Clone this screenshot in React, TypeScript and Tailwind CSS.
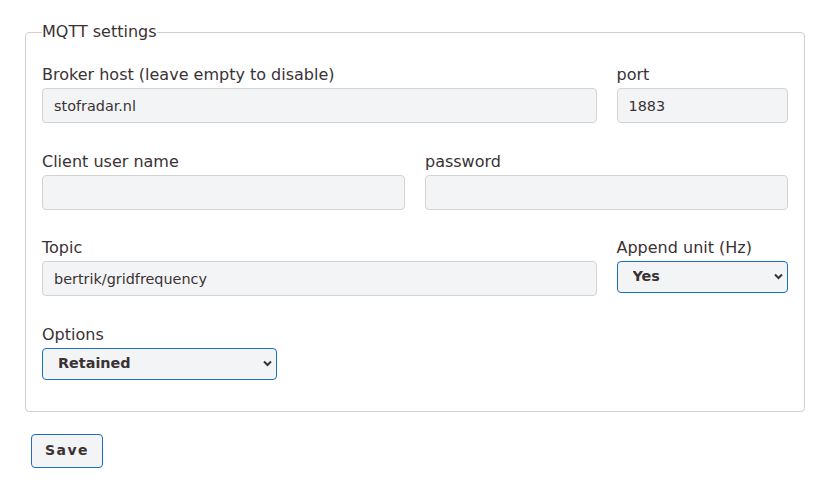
import React from "react";

const font = { fontFamily: '"DejaVu Sans", "Noto Sans", sans-serif' };

function Input({ value }: { value: string }) {
  return (
    <input
      readOnly
      value={value}
      className="block h-[35px] w-full rounded-[4px] border border-[#d3d3d3] bg-[#f3f4f6] px-[11px] text-[14.4px] text-[#3a3234] outline-none"
      style={font}
    />
  );
}

function Select({ value }: { value: string }) {
  return (
    <div className="relative h-[32px] w-full">
      <select
        defaultValue={value}
        className="block h-[32px] w-full appearance-none rounded-[4px] border border-[#1a6fc4] bg-[#f3f4f6] pl-[15px] text-[14.4px] font-bold text-[#3a3234] outline-none"
        style={font}
      >
        <option>{value}</option>
      </select>
      <svg
        className="pointer-events-none absolute right-[5px] top-[12px]"
        width="9"
        height="7"
        viewBox="0 0 9 7"
      >
        <path d="M1 1.5 L4.5 5 L8 1.5" fill="none" stroke="#3a3234" strokeWidth="2" />
      </svg>
    </div>
  );
}

function Field({
  label,
  span,
  children,
}: {
  label: string;
  span: string;
  children: React.ReactNode;
}) {
  return (
    <div className={span}>
      <div className="mb-[2px] h-[22px] text-[16px] leading-[22px] text-[#3a3234]">{label}</div>
      {children}
    </div>
  );
}

export default function App() {
  return (
    <div className="min-h-[493px] bg-white pl-[25px] pr-[27px] pt-[22px]" style={font}>
      <fieldset className="m-0 rounded-[4px] border border-[#cfcfcf] px-[16px] pb-[31px] pt-[22px]">
        <legend className="px-0 text-[16px] leading-[20px] text-[#3a3234]">MQTT settings</legend>
        <div className="grid grid-cols-12 gap-x-[20px] gap-y-[27.5px] items-start">
          <Field label="Broker host (leave empty to disable)" span="col-span-9">
            <Input value="stofradar.nl" />
          </Field>
          <Field label="port" span="col-span-3">
            <Input value="1883" />
          </Field>
          <Field label="Client user name" span="col-span-6">
            <Input value="" />
          </Field>
          <Field label="password" span="col-span-6">
            <Input value="" />
          </Field>
          <Field label="Topic" span="col-span-9">
            <Input value="bertrik/gridfrequency" />
          </Field>
          <Field label="Append unit (Hz)" span="col-span-3">
            <Select value="Yes" />
          </Field>
          <Field label="Options" span="col-span-4">
            <Select value="Retained" />
          </Field>
        </div>
      </fieldset>
      <button
        className="ml-[6px] mt-[22px] h-[34px] w-[72px] rounded-[4px] border border-[#1a6fc4] bg-[#f3f4f6] text-[14px] font-bold tracking-[1.5px] text-[#3a3234]"
        style={font}
      >
        Save
      </button>
    </div>
  );
}
